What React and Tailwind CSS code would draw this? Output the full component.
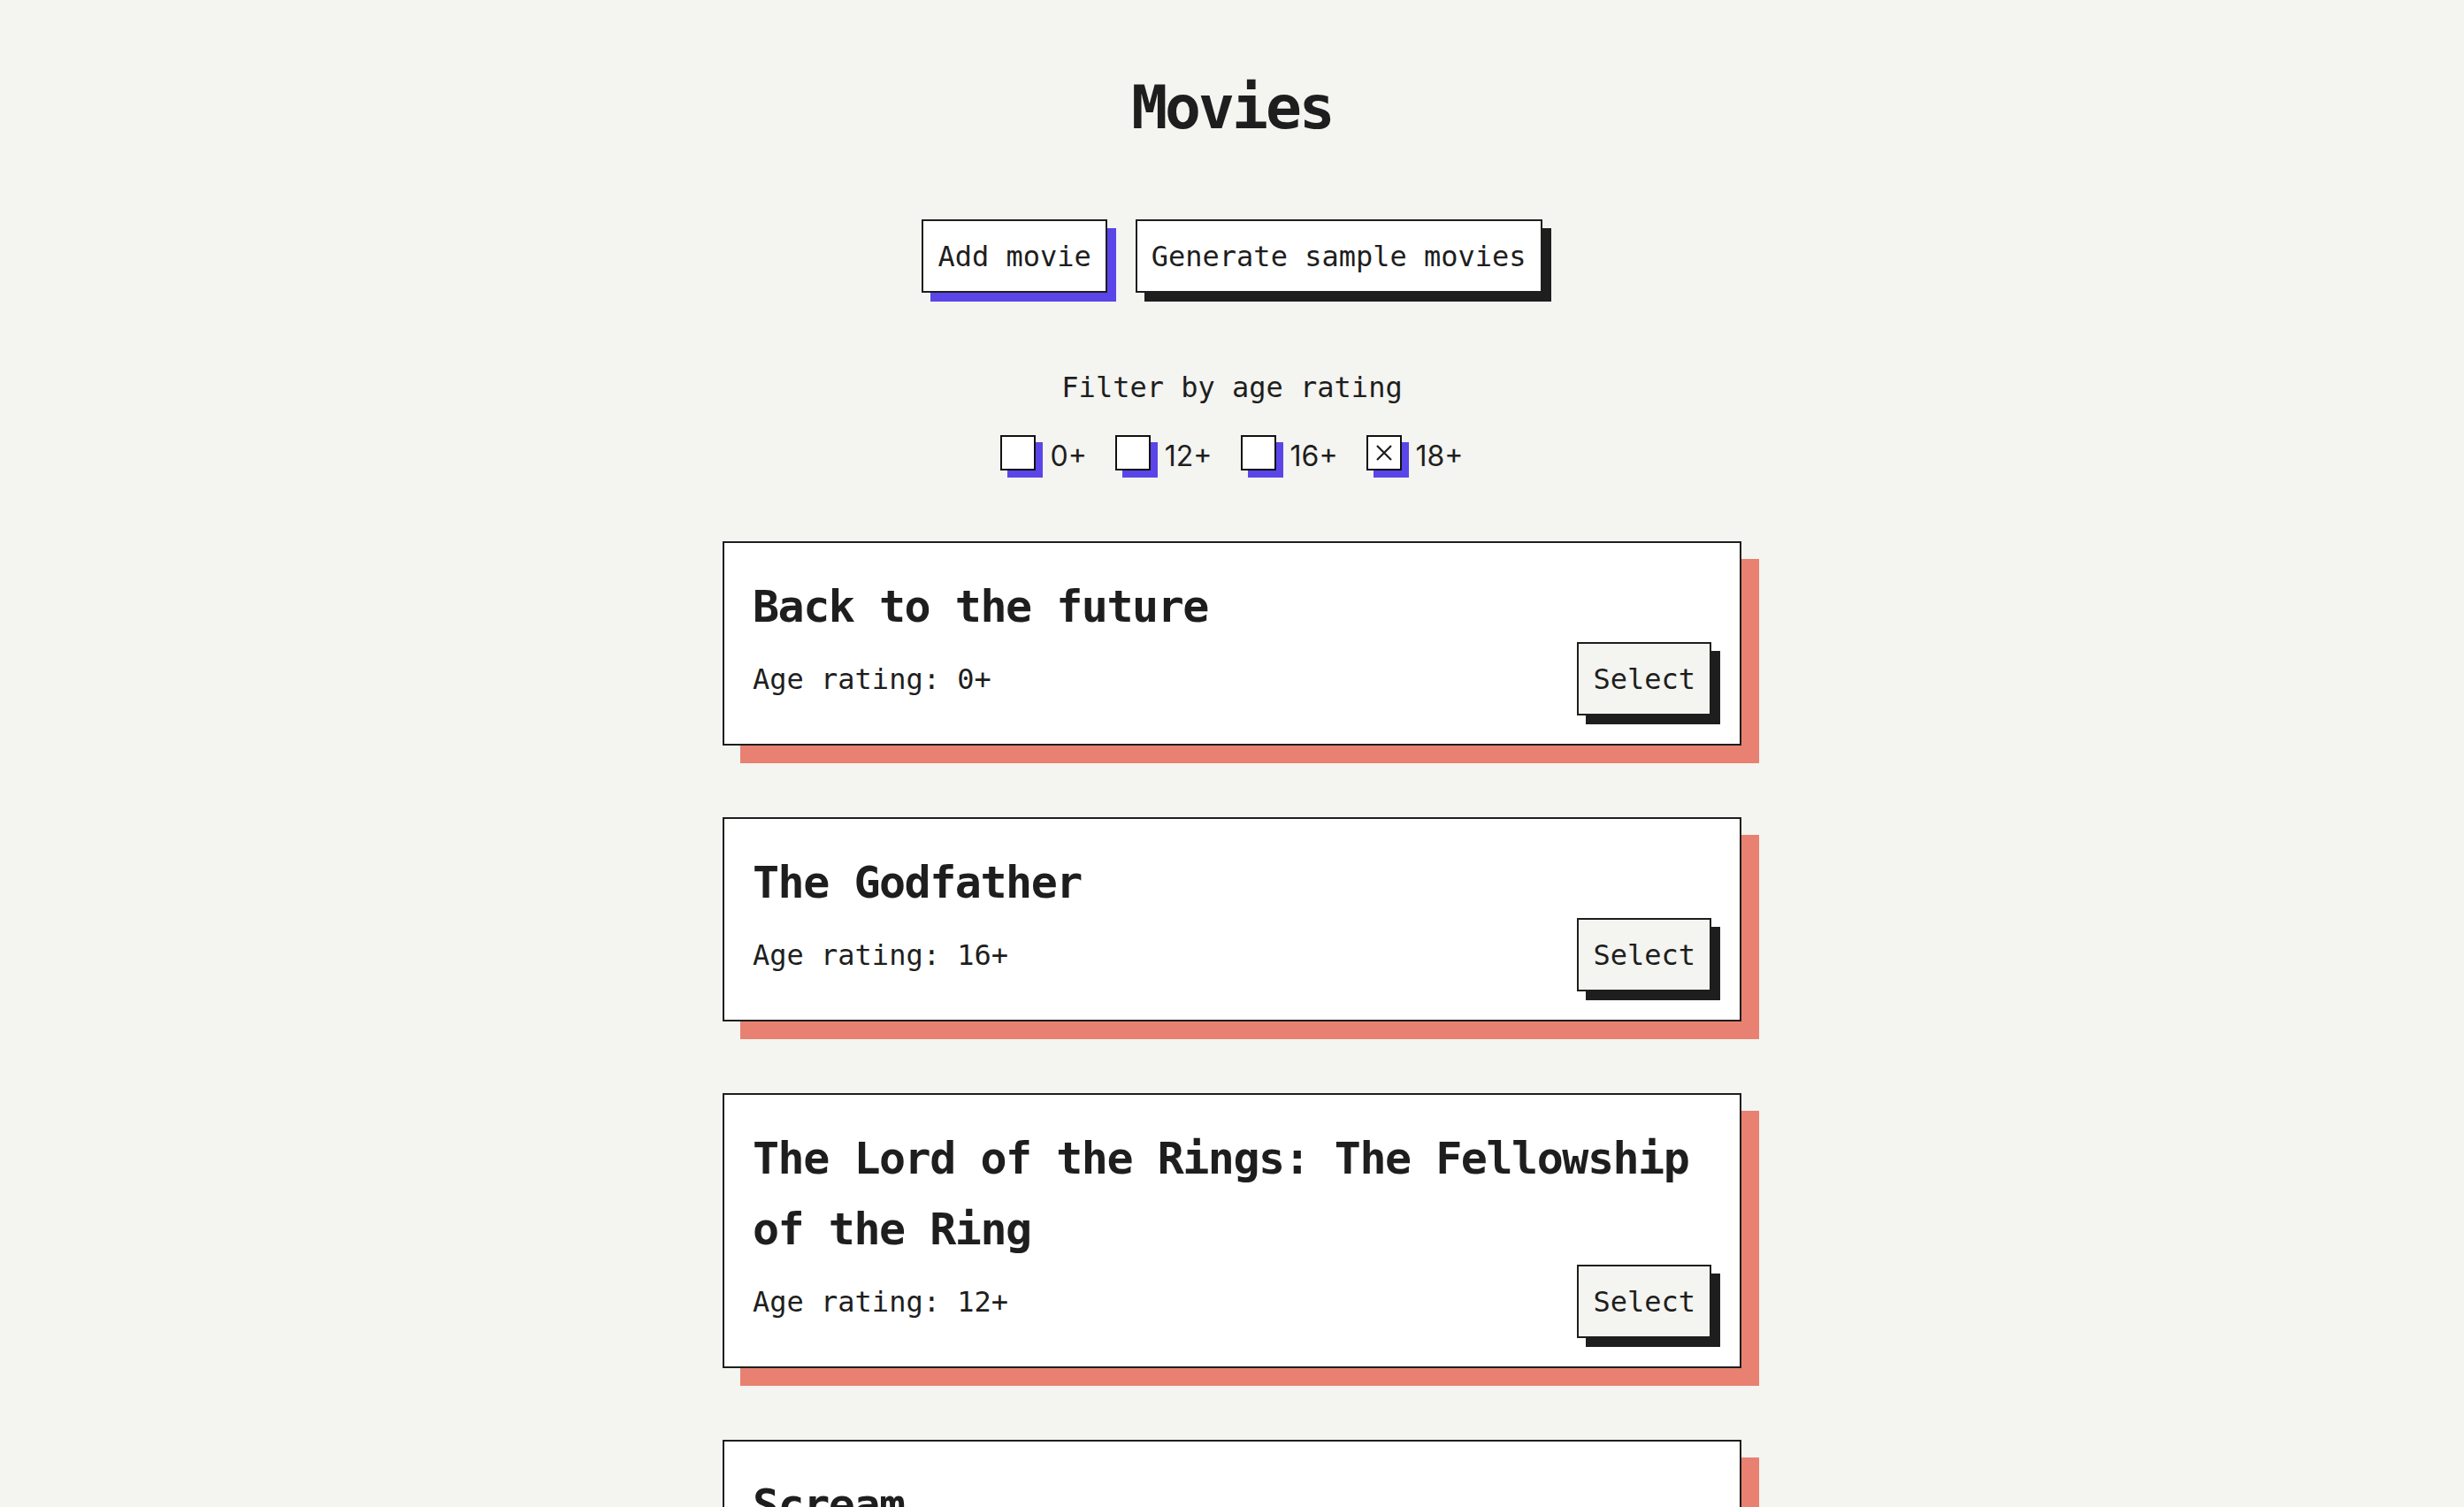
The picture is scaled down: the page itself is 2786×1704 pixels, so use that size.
import React, { useState } from 'react';

const movies = [
  { id: 1, title: 'Back to the future', rating: '0+' },
  { id: 2, title: 'The Godfather', rating: '16+' },
  { id: 3, title: 'The Lord of the Rings: The Fellowship of the Ring', rating: '12+' },
  { id: 4, title: 'Scream', rating: '18+' },
];

const ratings = ['0+', '12+', '16+', '18+'];

const mono = "font-['DejaVu_Sans_Mono',monospace]";

const AgeCheckbox = ({ label, checked, onToggle }) => (
  <label className="flex items-center gap-4 cursor-pointer">
    <span
      onClick={onToggle}
      className="w-[40px] h-[40px] border-2 border-[#111] bg-white shadow-[8px_8px_0_#5a46e8] flex items-center justify-center"
    >
      {checked && (
        <svg width="20" height="20" viewBox="0 0 20 20" fill="none" stroke="#1e1e1e" strokeWidth="2.2">
          <path d="M2 2 L18 18 M18 2 L2 18" />
        </svg>
      )}
    </span>
    <span className="font-['Inter',sans-serif] text-[32px] leading-[40px] pt-[9px] text-[#1e1e1e]">{label}</span>
  </label>
);

const App = () => {
  const [selected, setSelected] = useState(['18+']);

  const toggle = (r) => {
    setSelected((prev) => (prev.includes(r) ? prev.filter((x) => x !== r) : [...prev, r]));
  };

  return (
    <div className={`min-h-screen bg-[#f4f4f0] text-[#1e1e1e] pt-[82px] pb-40 flex flex-col items-center ${mono}`}>
      <h1 className="text-[68px] leading-[80px] font-bold tracking-[-3px]">Movies</h1>

      {/* Actions */}
      <div className="flex gap-[32px] mt-[86px]">
        <button className="bg-white border-2 border-[#1e1e1e] px-4 py-[15.5px] text-[32px] leading-[48px] shadow-[10px_10px_0_#5a46e8]">
          Add movie
        </button>
        <button className="bg-white border-2 border-[#1e1e1e] px-4 py-[15.5px] text-[32px] leading-[48px] shadow-[10px_10px_0_#1e1e1e]">
          Generate sample movies
        </button>
      </div>

      {/* Filter */}
      <p className="mt-[83px] text-[32px] leading-[48px]">Filter by age rating</p>
      <div className="flex items-center gap-8 mt-[25px]">
        {ratings.map((r) => (
          <AgeCheckbox key={r} label={r} checked={selected.includes(r)} onToggle={() => toggle(r)} />
        ))}
      </div>

      {/* Movie list */}
      <div className="flex flex-col gap-[81px] mt-[76px] w-[1152px]">
        {movies.map((m) => (
          <div key={m.id} className="bg-white border-2 border-[#1e1e1e] p-8 shadow-[20px_20px_0_#e88171]">
            <h2 className="text-[50px] leading-[80px] font-bold tracking-[-1.5px]">{m.title}</h2>
            <div className="flex items-center justify-between">
              <span className="text-[32px] leading-[48px]">Age rating: {m.rating}</span>
              <button className="bg-[#f4f4f0] border-2 border-[#1e1e1e] px-4 py-[15.5px] text-[32px] leading-[48px] shadow-[10px_10px_0_#1e1e1e]">
                Select
              </button>
            </div>
          </div>
        ))}
      </div>
    </div>
  );
};

export default App;
